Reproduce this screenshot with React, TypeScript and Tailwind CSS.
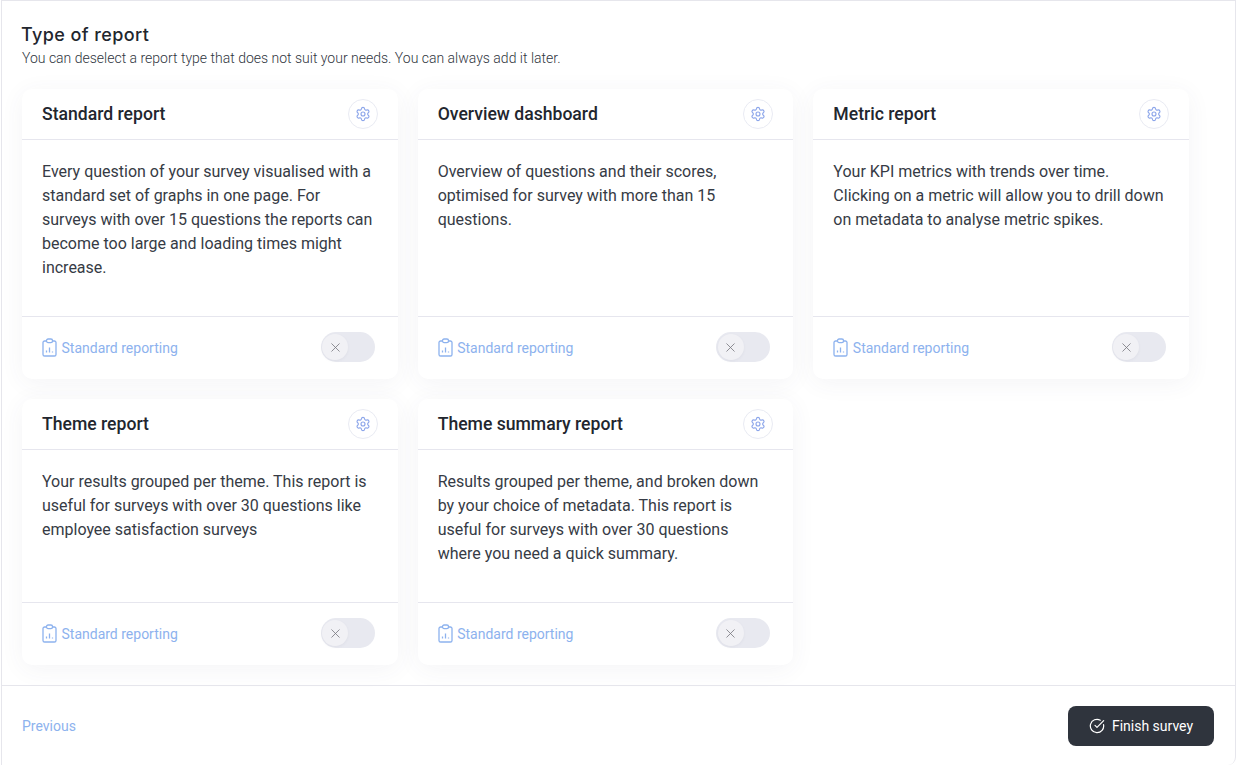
import { CircleCheckBig, Settings, X } from "lucide-react";

const reports = [
  {
    title: "Standard report",
    body: "Every question of your survey visualised with a standard set of graphs in one page. For surveys with over 15 questions the reports can become too large and loading times might increase.",
  },
  {
    title: "Overview dashboard",
    body: "Overview of questions and their scores, optimised for survey with more than 15 questions.",
  },
  {
    title: "Metric report",
    body: "Your KPI metrics with trends over time. Clicking on a metric will allow you to drill down on metadata to analyse metric spikes.",
  },
  {
    title: "Theme report",
    body: "Your results grouped per theme. This report is useful for surveys with over 30 questions like employee satisfaction surveys",
  },
  {
    title: "Theme summary report",
    body: "Results grouped per theme, and broken down by your choice of metadata. This report is useful for surveys with over 30 questions where you need a quick summary.",
  },
];

function ClipboardChart() {
  return (
    <svg width="15" height="19" viewBox="0 0 15 19" fill="none" stroke="#8db2ee" strokeWidth="1.3" className="mb-[2px] shrink-0">
      <path d="M4.5 3H2.6A1.6 1.6 0 0 0 1 4.6v11.8A1.6 1.6 0 0 0 2.6 18h9.8a1.6 1.6 0 0 0 1.6-1.6V4.6A1.6 1.6 0 0 0 12.4 3h-1.9" />
      <rect x="4.5" y="1" width="6" height="3.6" rx="1.6" />
      <path d="M4.5 14.5v-2M7.5 14.5v-5M10.5 14.5v-1" />
    </svg>
  );
}

function ReportCard({ title, body }: { title: string; body: string }) {
  return (
    <div className="flex flex-col rounded-[10px] bg-white shadow-[0_4px_24px_rgba(60,70,110,0.06)]">
      <div className="flex h-[51px] items-center justify-between border-b border-[#e6e6ee] pl-5 pr-5">
        <h3 className="text-[17.6px] font-medium text-[#22262e]">{title}</h3>
        <button type="button" className="flex h-[30px] w-[30px] items-center justify-center rounded-full border border-[#e9ebf3] bg-white">
          <Settings size={16} strokeWidth={1.7} color="#8ba5ea" />
        </button>
      </div>
      <p className="flex-1 px-5 pb-9 pt-5 text-[16px] leading-6 text-[#363b45]">{body}</p>
      <div className="flex h-[63px] items-center justify-between border-t border-[#e6e6ee] pl-5 pr-[23px]">
        <div className="flex items-center gap-[4.5px] text-[14px] text-[#8db2ee]">
          <ClipboardChart />
          <span className="mt-px">Standard reporting</span>
        </div>
        <div className="mb-[2px] flex h-[30px] w-[54px] items-center rounded-full bg-[#e8e9f0] pl-[1.5px]">
          <span className="flex h-[26px] w-[26px] items-center justify-center rounded-full bg-[#f1f1f5] shadow-[0_1px_3px_rgba(60,70,110,0.06)]">
            <X size={15} strokeWidth={1.3} color="#77777f" />
          </span>
        </div>
      </div>
    </div>
  );
}

export default function App() {
  return (
    <div className="relative ml-px flex h-[765px] w-[1235px] flex-col overflow-hidden rounded-br-lg border-x border-t border-[#e6e6ec] bg-white font-['Roboto',sans-serif]">
      <div className="flex-1 pl-[20px] pr-[46px] pt-[24px]">
        <h2 className="-ml-px font-['Inter',sans-serif] text-[18px] font-[450] leading-5 tracking-[0.4px] text-[#22262e]">Type of report</h2>
        <p className="mt-[3px] text-[14px] font-light leading-5 text-[#2f3540]">
          You can deselect a report type that does not suit your needs. You can always add it later.
        </p>
        <div className="mt-[21px] grid grid-cols-3 gap-5">
          {reports.map((r) => (
            <ReportCard key={r.title} title={r.title} body={r.body} />
          ))}
        </div>
      </div>
      <div className="flex h-[80px] items-center justify-between border-t border-[#e6e6ec] pl-[20px] pr-[21px]">
        <button type="button" className="mt-px text-[14px] text-[#8db2ee]">Previous</button>
        <button type="button" className="flex h-10 w-[146px] items-center justify-center gap-[7px] rounded-lg bg-[#2f343d] text-[14px] text-white">
          <CircleCheckBig size={16} strokeWidth={1.8} color="#ffffff" />
          <span className="mt-px">Finish survey</span>
        </button>
      </div>
      <div className="absolute right-[-1px] top-[239px] h-[109px] w-px bg-[#8a5a72]" />
    </div>
  );
}
